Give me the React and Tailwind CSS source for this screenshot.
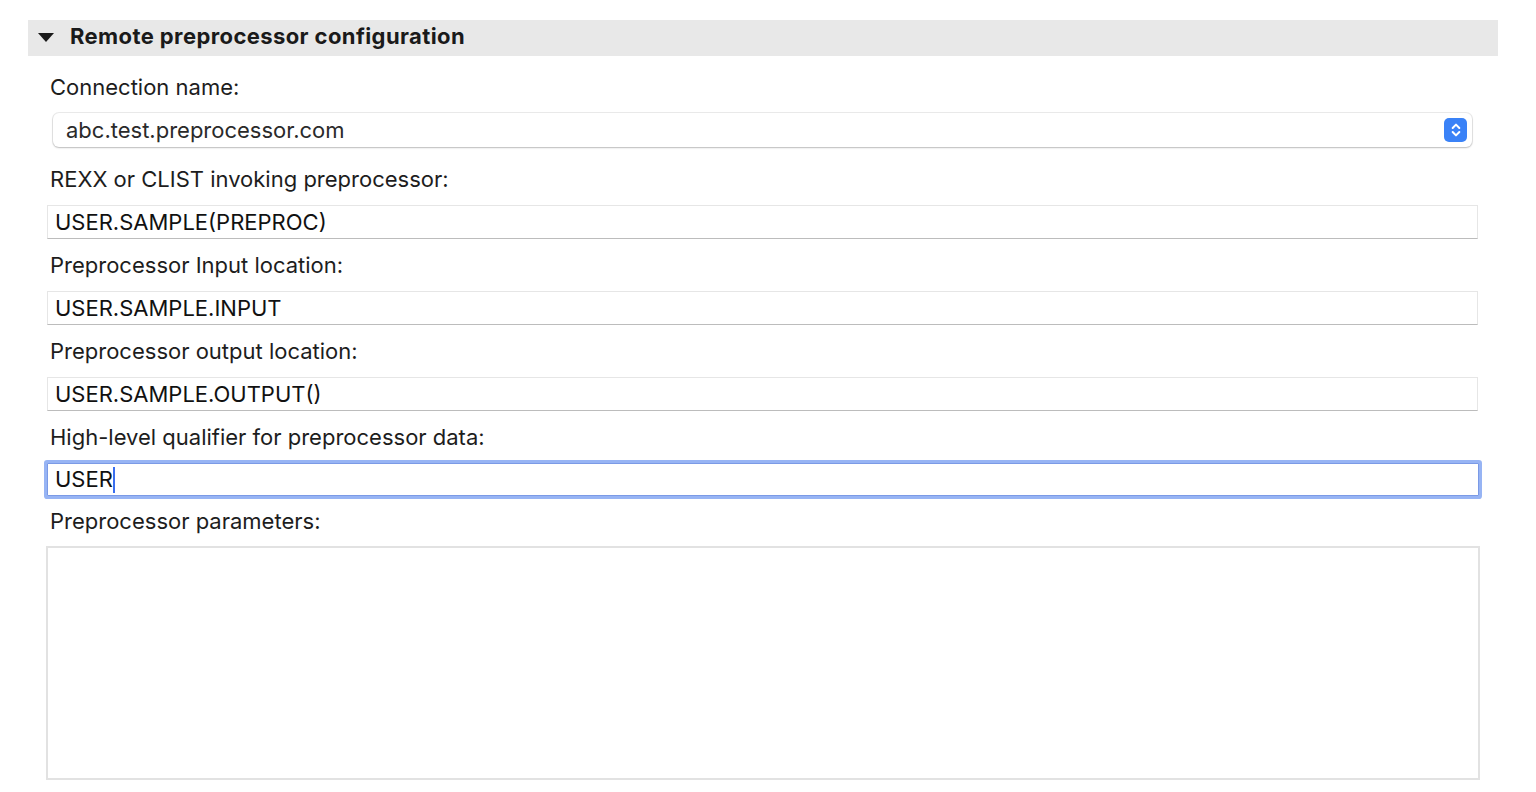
import { ChevronsUpDown } from 'lucide-react'

const fields = [
  { label: 'REXX or CLIST invoking preprocessor:', value: 'USER.SAMPLE(PREPROC)' },
  { label: 'Preprocessor Input location:', value: 'USER.SAMPLE.INPUT' },
  { label: 'Preprocessor output location:', value: 'USER.SAMPLE.OUTPUT()' },
]

function Label({ children, h = 'h-[52px]' }) {
  return <div className={`${h} flex items-center pl-[50px] text-[22px] text-[#1d1d1d]`}>{children}</div>
}

export default function App() {
  return (
    <div
      className="w-[1536px] h-[792px] bg-white overflow-hidden pt-[20px]"
      style={{ fontFamily: 'Inter, "Liberation Sans", sans-serif' }}
    >
      {/* Section header */}
      <div className="ml-[28px] mr-[38px] h-[36px] bg-[#e8e8e8] flex items-center pb-[3px]">
        <svg className="ml-[10px] mt-[3px] w-[16px] h-[10px]" viewBox="0 0 16 10">
          <polygon points="0,0 16,0 8,9" fill="#1a1a1a" />
        </svg>
        <span className="ml-[16px] text-[22px] font-bold text-[#1a1a1a] tracking-[0.4px]">
          Remote preprocessor configuration
        </span>
      </div>

      <div className="h-[5px]" />
      <Label>Connection name:</Label>

      {/* Select */}
      <div className="ml-[53px] w-[1419px] h-[34px] rounded-[6px] bg-white shadow-[0_0_0_1px_rgba(0,0,0,0.08),0_1px_2px_rgba(0,0,0,0.2)] flex items-center justify-between pl-[13px] pr-[5px]">
        <span className="text-[22px] text-[#2a2a2a]">abc.test.preprocessor.com</span>
        <div className="w-[23px] h-[24px] rounded-[5px] bg-[#3a82f7] flex items-center justify-center">
          <ChevronsUpDown className="w-[16px] h-[16px] text-white" strokeWidth={3} />
        </div>
      </div>

      <div className="h-[6px]" />

      {fields.map((f) => (
        <div key={f.label}>
          <Label>{f.label}</Label>
          <div className="ml-[47px] w-[1431px] h-[34px] border border-[#e6e6e6] border-b-[#bcbcbc] bg-white flex items-center pl-[7px] text-[22px] text-[#111]">
            {f.value}
          </div>
        </div>
      ))}

      <Label>High-level qualifier for preprocessor data:</Label>
      <div className="ml-[47px] w-[1432px] h-[33px] border border-[#7b9ae6] rounded-[1px] shadow-[0_0_0_3px_#97b4f4] bg-white flex items-center pl-[7px] text-[22px] text-[#111]">
        USER
        <span className="inline-block w-[2px] h-[26px] bg-[#3a6ff0]" />
      </div>

      <Label h="h-[50px]">Preprocessor parameters:</Label>
      <div className="ml-[46px] w-[1434px] h-[234px] border-2 border-[#e2e2e2] bg-white" />
    </div>
  )
}
